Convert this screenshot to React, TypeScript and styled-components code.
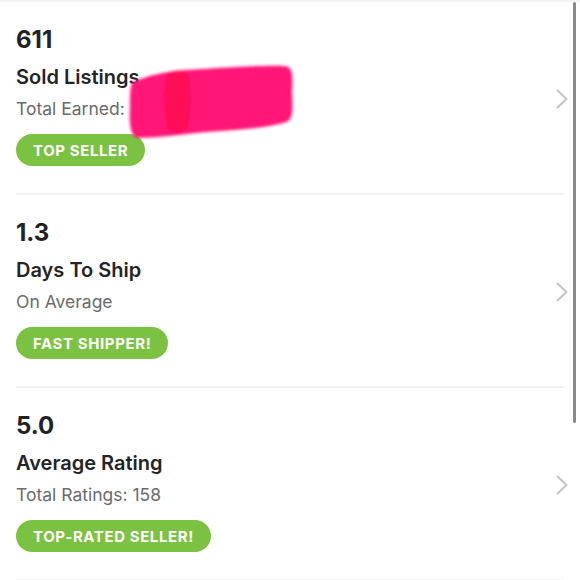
import styled, { createGlobalStyle } from "styled-components";

const GlobalStyle = createGlobalStyle`
  html, body {
    margin: 0;
    padding: 0;
    background: #ffffff;
    overflow: hidden;
  }
  body {
    font-family: "Inter", "Open Sans", sans-serif;
    -webkit-font-smoothing: antialiased;
  }
`;

type Stat = {
  value: string;
  title: string;
  subtitle: string;
  badge: string;
  redacted?: boolean;
};

const stats: Stat[] = [
  {
    value: "611",
    title: "Sold Listings",
    subtitle: "Total Earned:",
    badge: "Top Seller",
    redacted: true,
  },
  {
    value: "1.3",
    title: "Days To Ship",
    subtitle: "On Average",
    badge: "Fast Shipper!",
  },
  {
    value: "5.0",
    title: "Average Rating",
    subtitle: "Total Ratings: 158",
    badge: "Top-Rated Seller!",
  },
];

function Chevron() {
  return (
    <ChevronIcon width="12" height="20" viewBox="0 0 12 20" fill="none">
      <path
        d="M1.5 1.5l9 8.5-9 8.5"
        stroke="#c4c4c4"
        strokeWidth="2"
        strokeLinecap="round"
        strokeLinejoin="round"
      />
    </ChevronIcon>
  );
}

function Scribble() {
  return (
    <ScribbleSvg width="175" height="85" viewBox="0 0 175 85">
      <defs>
        <filter id="soft" x="-10%" y="-10%" width="120%" height="120%">
          <feGaussianBlur stdDeviation="1.6" />
        </filter>
      </defs>
      <g filter="url(#soft)">
        <path
          d="M6 20 C 20 14, 38 9, 60 8 C 100 5, 140 3, 158 4 C 166 5, 166 14, 165 30 C 166 48, 166 56, 160 60 C 140 66, 110 68, 80 70 C 50 73, 25 76, 10 76 C 3 74, 2 60, 3 45 C 3 32, 3 24, 6 20 Z"
          fill="#ff1477"
        />
        <path
          d="M40 12 C 48 7, 58 8, 62 14 C 64 30, 64 55, 60 66 C 54 72, 44 72, 40 66 C 37 50, 37 25, 40 12 Z"
          fill="#ff0752"
          opacity="0.9"
        />
      </g>
    </ScribbleSvg>
  );
}

export default function App() {
  return (
    <>
      <GlobalStyle />
      <Page>
        <List>
          {stats.map((s, i) => (
            <Section key={s.title} $last={i === stats.length - 1}>
              <Info>
                <Value>{s.value}</Value>
                <Title>{s.title}</Title>
                <Subtitle>{s.subtitle}</Subtitle>
                <Badge>{s.badge}</Badge>
              </Info>
              <Chevron />
              {s.redacted && <Scribble />}
            </Section>
          ))}
        </List>
        <Scrollbar />
      </Page>
    </>
  );
}

const Page = styled.div`
  position: relative;
  width: 580px;
  height: 580px;
  background: #fff;
  border-top: 2px solid #f3f3f1;
  box-sizing: border-box;
  overflow: hidden;
`;

const List = styled.div`
  display: flex;
  flex-direction: column;
`;

const Section = styled.div<{ $last?: boolean }>`
  position: relative;
  height: 193px;
  margin: 0 16px;
  padding-top: 24px;
  box-sizing: border-box;
  display: flex;
  align-items: flex-start;
  justify-content: space-between;
  border-bottom: ${(p) => (p.$last ? "2px solid #f6f6f6" : "2px solid #f1f1f1")};
`;

const Info = styled.div`
  display: flex;
  flex-direction: column;
  align-items: flex-start;
`;

const Value = styled.div`
  font-size: 24px;
  line-height: 28px;
  font-weight: 700;
  color: #222222;
`;

const Title = styled.div`
  margin-top: 11px;
  font-size: 20px;
  line-height: 24px;
  font-weight: 600;
  color: #242424;
`;

const Subtitle = styled.div`
  margin-top: 9px;
  font-size: 17.5px;
  line-height: 22px;
  font-weight: 400;
  color: #6b6b6b;
`;

const Badge = styled.span`
  margin-top: 14px;
  display: inline-flex;
  align-items: center;
  height: 32px;
  padding: 0 17px;
  border-radius: 16px;
  background: #7cc242;
  color: #ffffff;
  font-size: 15px;
  font-weight: 700;
  letter-spacing: 0.6px;
  text-transform: uppercase;
`;

const ChevronIcon = styled.svg`
  flex-shrink: 0;
  align-self: center;
  margin-top: -22px;
  margin-right: -4px;
`;

const ScribbleSvg = styled.svg`
  position: absolute;
  left: 111px;
  top: 60px;
  pointer-events: none;
`;

const Scrollbar = styled.div`
  position: absolute;
  top: 0;
  right: 4px;
  width: 3px;
  height: 421px;
  border-radius: 2px;
  background: #8a8a8a;
`;
